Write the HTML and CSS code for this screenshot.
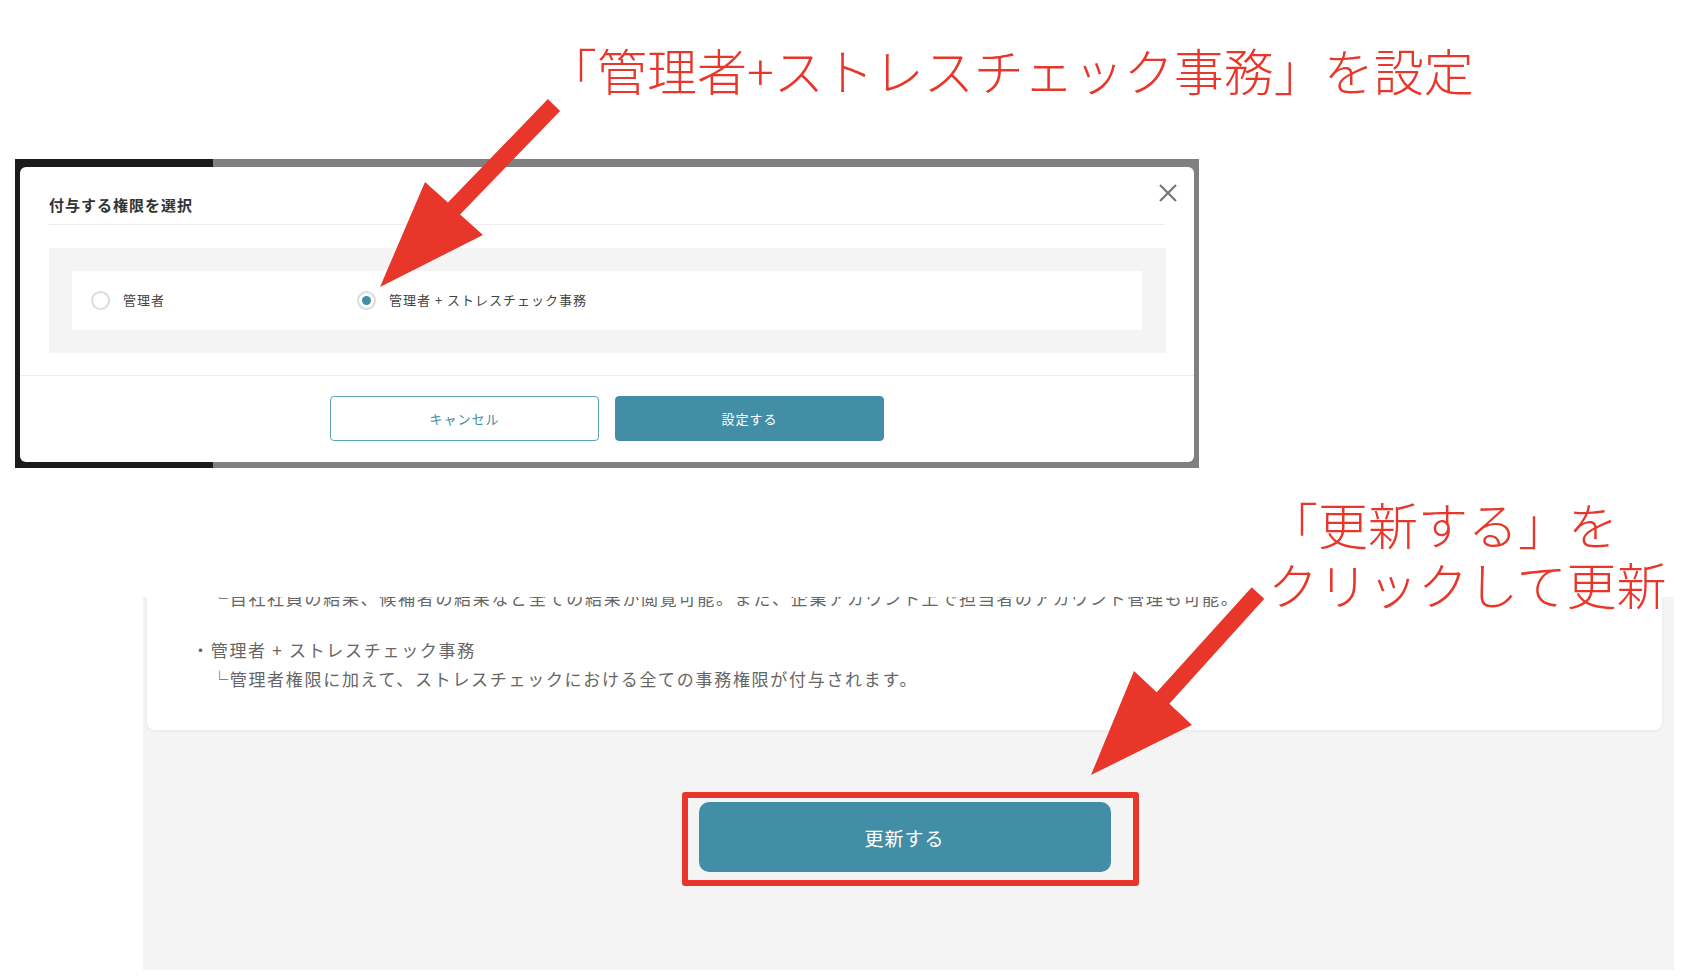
FILE: index.html
```html
<!DOCTYPE html>
<html lang="ja">
<head>
<meta charset="utf-8">
<title>権限設定</title>
<link rel="stylesheet" href="styles.css">
</head>
<body>
<div class="canvas">
  <p class="note note-top">「管理者+ストレスチェック事務」を設定</p>

  <div class="shot shot-modal">
    <div class="modal">
      <div class="modal-head">
        <h2 class="modal-title">付与する権限を選択</h2>
        <span class="close" aria-label="閉じる">
          <svg width="20" height="20" viewBox="0 0 20 20"><path d="M2 2 L18 18 M18 2 L2 18" stroke="#777" stroke-width="2.2" fill="none"/></svg>
        </span>
      </div>
      <div class="modal-body">
        <div class="choice-box">
          <div class="choices">
            <label class="choice choice-first"><span class="radio"></span><span class="choice-label">管理者</span></label>
            <label class="choice"><span class="radio on"></span><span class="choice-label">管理者 + ストレスチェック事務</span></label>
          </div>
        </div>
      </div>
      <div class="modal-foot">
        <button class="btn btn-outline">キャンセル</button>
        <button class="btn btn-fill">設定する</button>
      </div>
    </div>
  </div>

  <div class="shot shot-page">
    <div class="card">
      <p class="line sub">└自社社員の結果、候補者の結果など全ての結果が閲覧可能。また、企業アカウント上で担当者のアカウント管理も可能。</p>
      <div class="block">
        <p class="line">・管理者 + ストレスチェック事務</p>
        <p class="line sub">└管理者権限に加えて、ストレスチェックにおける全ての事務権限が付与されます。</p>
      </div>
    </div>
    <div class="actions">
      <div class="update-wrap">
        <button class="btn-update">更新する</button>
        <span class="red-box"></span>
      </div>
    </div>
  </div>

  <p class="note note-side">「更新する」を<br>クリックして更新</p>

  <svg class="arrows" width="1694" height="980" viewBox="0 0 1694 980">
    <polygon fill="#e8362a" points="380,287 425,182 447.9,202.6 547.9,99.1 560.1,110.9 460.1,214.4 483,235"/>
    <polygon fill="#e8362a" points="1091,775 1134,671 1156.7,692.3 1251.7,587.3 1264.3,598.7 1169.3,703.7 1192,725"/>
  </svg>
</div>
</body>
</html>
```

FILE: styles.css
```css
* { box-sizing: border-box; }

html, body {
  margin: 0;
  padding: 0;
  background: #ffffff;
}

body {
  font-family: "Noto Sans CJK JP", "Noto Sans", "Liberation Sans", sans-serif;
}

.canvas {
  position: relative;
  width: 1694px;
  height: 980px;
  overflow: hidden;
}

/* annotations */
.note {
  margin: 0;
  color: #e8362a;
  font-size: 50px;
  line-height: 60px;
  font-weight: 300;
  white-space: nowrap;
}

.note-top {
  padding: 39px 0 0 547px;
  height: 103px;
}

.note-side {
  position: absolute;
  left: 1268px;
  top: 493px;
  z-index: 3;
}

.arrows {
  position: absolute;
  left: 0;
  top: 0;
  z-index: 4;
  pointer-events: none;
}

/* screenshot of modal */
.shot-modal {
  margin: 56px 0 0 15px;
  width: 1184px;
  height: 309px;
  padding: 8px 5px 6px 5px;
  background: linear-gradient(to right, #1b1b1b 0, #1b1b1b 198px, #808080 198px, #808080 100%);
}

.modal {
  height: 295px;
  background: #ffffff;
  border-radius: 6px;
  display: flex;
  flex-direction: column;
}

.modal-head {
  margin: 0 29px;
  padding: 16px 0 9px;
  border-bottom: 1px solid #ececec;
  display: flex;
  justify-content: space-between;
  align-items: flex-start;
}

.modal-title {
  margin: 12px 0 0;
  font-size: 15px;
  line-height: 20px;
  font-weight: 700;
  letter-spacing: 1px;
  color: #333333;
}

.close {
  display: block;
  width: 20px;
  height: 20px;
  margin-right: -13px;
}

.close svg { display: block; }

.modal-body {
  padding: 23px 28px 22px 29px;
}

.choice-box {
  background: #f4f4f4;
  padding: 23px 24px 23px 23px;
}

.choices {
  background: #ffffff;
  height: 59px;
  display: flex;
  align-items: center;
  padding-left: 19px;
}

.choice {
  display: flex;
  align-items: center;
  gap: 13px;
  font-size: 13px;
  letter-spacing: 1px;
  color: #444444;
}

.choice-label {
  margin-top: -2px;
}

.choice-first {
  width: 266px;
}

.radio {
  width: 19px;
  height: 19px;
  border-radius: 50%;
  border: 2px solid #dcdcdc;
  background: #ffffff;
  display: flex;
  align-items: center;
  justify-content: center;
}

.radio.on::after {
  content: "";
  width: 9px;
  height: 9px;
  border-radius: 50%;
  background: #428ea6;
}

.modal-foot {
  border-top: 1px solid #ececec;
  padding: 20px 0;
  display: flex;
  justify-content: center;
  gap: 16px;
}

.btn {
  width: 269px;
  height: 45px;
  border-radius: 4px;
  font-family: inherit;
  font-size: 13px;
  letter-spacing: 1px;
  cursor: pointer;
}

.btn-outline {
  background: #ffffff;
  border: 1px solid #5fa3b8;
  color: #428ea6;
}

.btn-fill {
  background: #428ea6;
  border: 1px solid #428ea6;
  color: #ffffff;
}

/* screenshot of page bottom */
.shot-page {
  margin: 129px 0 0 143px;
  width: 1531px;
  height: 373px;
  background: #f4f4f4;
  overflow: hidden;
  padding: 0 12px 0 4px;
}

.card {
  margin-top: -40px;
  padding: 26px 40px 37px 45px;
  background: #ffffff;
  border-radius: 8px;
  box-shadow: 0 1px 4px rgba(0, 0, 0, 0.06);
}

.line {
  margin: 0;
  font-size: 17px;
  line-height: 29px;
  letter-spacing: 1.7px;
  color: #666666;
  white-space: nowrap;
}

.line.sub {
  padding-left: 19px;
}

.block {
  margin-top: 23px;
}

.actions {
  margin-top: 72px;
  display: flex;
  justify-content: center;
}

.update-wrap {
  position: relative;
}

.btn-update {
  display: block;
  width: 412px;
  height: 70px;
  border: none;
  border-radius: 10px;
  background: #428ea6;
  color: #ffffff;
  font-family: inherit;
  font-size: 19px;
  letter-spacing: 1px;
}

.red-box {
  position: absolute;
  left: -17px;
  top: -10px;
  width: 457px;
  height: 94px;
  border: 6px solid #e8362a;
  border-radius: 3px;
}
```
